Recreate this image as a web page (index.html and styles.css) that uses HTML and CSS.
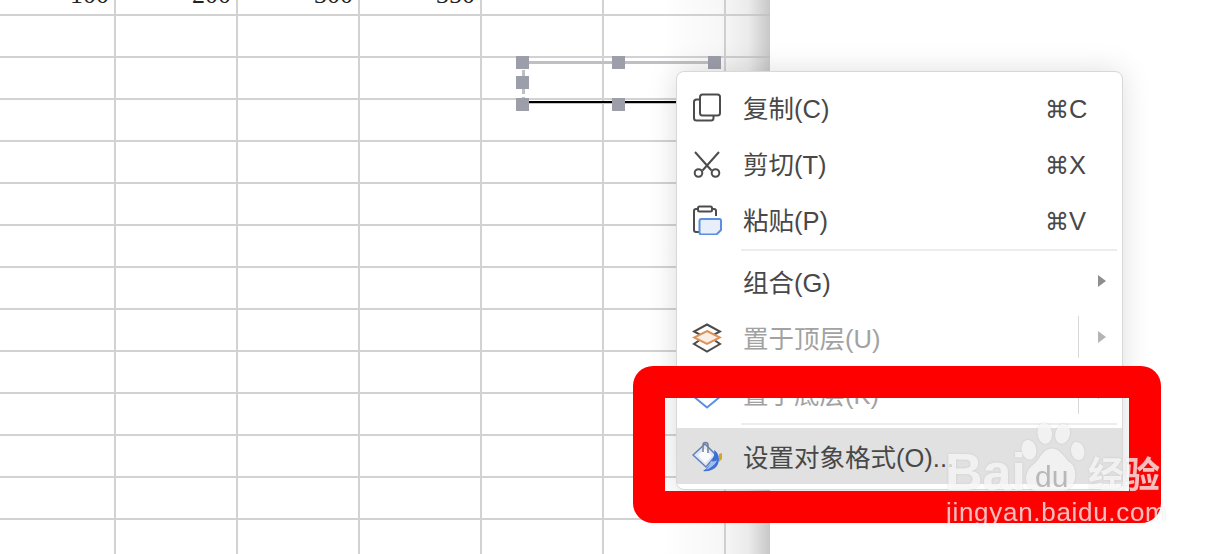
FILE: index.html
```html
<!DOCTYPE html>
<html lang="zh-CN">

<head>
	<meta charset="UTF-8" />
	<title>设置对象格式</title>
	<link rel="stylesheet" href="styles.css">
</head>

<body>
	<div class="sheet">
		<div class="axis">
			<div class="axis-cell first">100</div>
			<div class="axis-cell">200</div>
			<div class="axis-cell">300</div>
			<div class="axis-cell">350</div>
		</div>
		<div class="shade"></div>

		<!-- selected text box -->
		<div class="shape">
			<span class="handle h1"></span>
			<span class="handle h2"></span>
			<span class="handle h3"></span>
			<span class="handle h4"></span>
			<span class="handle h5"></span>
			<span class="handle h6"></span>
		</div>
	</div>

	<div class="menu">
		<div class="item">
			<span class="icon">
				<svg width="30" height="30" viewBox="0 0 30 30" fill="none" stroke="#4c4c4c" stroke-width="2">
					<rect x="8" y="1.500" width="20" height="21" rx="2.500" />
					<path d="M8 6.500H4.500A2.500 2.500 0 0 0 2 9v16a2.500 2.500 0 0 0 2.500 2.500H19a2.500 2.500 0 0 0 2.500-2.500v-2.500" />
				</svg>
			</span>
			<span class="label">复制(C)</span>
			<span class="key"><span class="cmd">⌘</span>C</span>
		</div>
		<div class="item">
			<span class="icon">
				<svg width="30" height="30" viewBox="0 0 30 30" fill="none" stroke="#4c4c4c" stroke-width="2">
					<path d="M3 3l16.500 18.500M27 3L10.500 21.500" />
					<circle cx="6.500" cy="24" r="3.800" />
					<circle cx="23.500" cy="24" r="3.800" />
				</svg>
			</span>
			<span class="label">剪切(T)</span>
			<span class="key"><span class="cmd">⌘</span>X</span>
		</div>
		<div class="item">
			<span class="icon">
				<svg width="30" height="30" viewBox="0 0 30 30" fill="none" stroke-width="2">
					<path d="M6 4H4a2 2 0 0 0-2 2v19a2 2 0 0 0 2 2h3M20 4h2a2 2 0 0 1 2 2v5" stroke="#4c4c4c" />
					<rect x="6" y="1.500" width="14" height="5" rx="1.500" stroke="#4c4c4c" />
					<path d="M9.500 14h18a1.500 1.500 0 0 1 1.500 1.500V25l-4.500 4.500H9.500a2 2 0 0 1-2-2V16a2 2 0 0 1 2-2z" fill="#e8eefa" stroke="#5b8fe0" />
				</svg>
			</span>
			<span class="label">粘贴(P)</span>
			<span class="key"><span class="cmd">⌘</span>V</span>
		</div>
		<div class="sep"></div>
		<div class="item">
			<span class="icon"></span>
			<span class="label">组合(G)</span>
			<span class="arrow"></span>
		</div>
		<div class="item off">
			<span class="icon">
				<svg width="30" height="30" viewBox="0 0 30 30" fill="none" stroke-width="2">
					<path d="M15 1.500L28 8.500 15 15.500 2 8.500z" stroke="#4c4c4c" />
					<path d="M7 17.500L2 21l13 7.500L28 21l-5-3.500" stroke="#4c4c4c" />
					<path d="M15 8L28 14.500 15 21 2 14.500z" fill="#fbeee3" stroke="#d9925a" />
				</svg>
			</span>
			<span class="label">置于顶层(U)</span>
			<span class="split"></span>
			<span class="arrow"></span>
		</div>
		<div class="item off">
			<span class="icon">
				<svg width="30" height="30" viewBox="0 0 30 30" fill="none" stroke-width="2">
					<path d="M15 1.500L28 8.500 15 15.500 2 8.500z" stroke="#4c4c4c" />
					<path d="M1 17l14 11.500L29 17" stroke="#5b8fe0" />
				</svg>
			</span>
			<span class="label">置于底层(K)</span>
			<span class="split"></span>
			<span class="arrow"></span>
		</div>
		<div class="sep tight"></div>
		<div class="item active">
			<span class="icon">
				<svg width="32" height="32" viewBox="0 0 32 32">
					<path d="M1 14L13 3l11 11-10 12z" fill="#dfe7f5" stroke="#5f7fb8" stroke-width="1.500" />
					<path d="M6 14L13 8l7 7-7 7z" fill="#f8fafd" />
					<path d="M11 11V4a2.500 2.500 0 0 1 5 0v8" fill="none" stroke="#77808f" stroke-width="1.500" />
					<path d="M22 9c5 3 6 9 4 14-2 5-9 8-15 7 3-2 5-4 7-7 3-4 5-9 4-14z" fill="#3d6fd6" />
					<path d="M19 20c2 1 5 0 6-1-1 4-6 8-11 10 2-2 4-5 5-9z" fill="#9fc0f0" />
					<path d="M27 13l3-1v6l-3 3z" fill="#d8a520" />
				</svg>
			</span>
			<span class="label">设置对象格式(O)...</span>
		</div>
	</div>

	<div class="mark-box"></div>

	<!-- watermark -->
	<div class="watermark">
		<span class="wm-bai">Bai</span>
		<svg class="wm-paw" width="66" height="70" viewBox="0 0 100 106">
			<ellipse cx="12" cy="42" rx="11" ry="15" transform="rotate(-12 12 42)" />
			<ellipse cx="36" cy="17" rx="11" ry="16" transform="rotate(-6 36 17)" />
			<ellipse cx="63" cy="18" rx="11" ry="15" transform="rotate(14 63 18)" />
			<ellipse cx="86" cy="44" rx="10" ry="14" transform="rotate(-14 86 44)" />
			<path d="M47 40c12 0 18 14 28 22 12 9 10 43-14 42H26C4 104 3 76 18 65c11-7 14-25 29-25z" />
		</svg>
		<span class="wm-du">du</span>
		<span class="wm-cn">经验</span>
		<span class="wm-url">jingyan.baidu.com</span>
	</div>
</body>

</html>
```

FILE: styles.css
```css
* {
	box-sizing: border-box;
}

html,
body {
	margin: 0;
	height: 100%;
	overflow: hidden;
	background: #fff;
}

/* sheet behind the menu */
.sheet {
	position: relative;
	width: 770px;
	height: 554px;
	overflow: hidden;
	background-color: #fff;
	background-image:
		repeating-linear-gradient(90deg, transparent 0, transparent 114px, #d2d2d2 114px, #d2d2d2 116px, transparent 116px, transparent 122px),
		repeating-linear-gradient(180deg, transparent 0, transparent 14px, #d2d2d2 14px, #d2d2d2 16px, transparent 16px, transparent 42px);
}

.axis {
	display: flex;
	margin-top: -18px;
	font-family: "Liberation Serif", serif;
	font-size: 26px;
	line-height: 26px;
	color: #222;
}

.axis-cell {
	width: 122px;
	padding-right: 6px;
	text-align: right;
}

.axis-cell.first {
	width: 115px;
}

.shade {
	position: absolute;
	top: 0;
	right: 0;
	bottom: 0;
	width: 110px;
	background: linear-gradient(90deg, rgba(190, 190, 190, 0), rgba(190, 190, 190, .12) 55%, rgba(190, 190, 190, .3) 80%, rgba(190, 190, 190, .85));
}

.shape {
	position: absolute;
	left: 522px;
	top: 61px;
	width: 192px;
	height: 42px;
	border-top: 3px solid #c0c0c4;
	border-left: 3px dashed #c0c0c4;
	border-bottom: 2px solid #000;
	box-shadow: 0 1px 0 #c4c4c4;
}

.handle {
	position: absolute;
	width: 13px;
	height: 13px;
	background: #9c9ea9;
}

.h1 { left: -9px; top: -8px; }
.h2 { left: 87px; top: -8px; }
.h3 { left: 183px; top: -8px; }
.h4 { left: -9px; top: 12px; }
.h5 { left: -9px; top: 34px; }
.h6 { left: 87px; top: 34px; }

/* context menu */
.menu {
	position: absolute;
	left: 676px;
	top: 71px;
	width: 447px;
	height: 419px;
	padding-top: 7px;
	background: #fff;
	border: 1px solid #d8d8d8;
	border-radius: 8px;
	box-shadow: 0 0 30px rgba(0, 0, 0, .13);
	font-family: "Liberation Sans", "Noto Sans CJK SC", sans-serif;
	font-size: 25.5px;
	color: #484848;
}

.item {
	display: flex;
	align-items: center;
	height: 56px;
	padding-left: 15px;
}

.icon {
	display: flex;
	align-items: center;
	width: 51px;
	height: 32px;
	margin-top: 2px;
	flex: none;
}

.label {
	flex: 1;
	padding-bottom: 2px;
	white-space: nowrap;
}

.key {
	width: 77px;
	padding-top: 3px;
	line-height: 30px;
}

.cmd {
	font-family: "DejaVu Sans", sans-serif;
	font-size: 24px;
	line-height: 1;
}

.arrow {
	width: 0;
	height: 0;
	margin-right: 16px;
	border-left: 8px solid #8e8e8e;
	border-top: 6px solid transparent;
	border-bottom: 6px solid transparent;
}

.split {
	width: 1px;
	height: 42px;
	margin-right: 19px;
	background: #d8d8d8;
}

.off .label {
	color: #a2a2a2;
}

.off .arrow {
	border-left-color: #b4b4b4;
}

.sep {
	height: 2px;
	margin: 2px 5px 2px 64px;
	background: #ededed;
}

.sep.tight {
	margin: 2px 5px 3px 64px;
}

.item.active {
	background: #e1e1e1;
}

/* red marker drawn on top */
.mark-box {
	position: absolute;
	left: 633px;
	top: 366px;
	width: 528px;
	height: 157px;
	border: 32px solid #f00;
	border-radius: 20px;
}

.watermark {
	position: absolute;
	left: 945px;
	top: 420px;
	width: 222px;
	height: 108px;
	color: rgba(255, 255, 255, .72);
	font-family: "Liberation Sans", sans-serif;
	filter: drop-shadow(0 0 1px rgba(120, 120, 120, .3));
}

.wm-bai {
	position: absolute;
	left: 0;
	top: 22px;
	font-size: 52px;
	font-weight: bold;
	line-height: 60px;
}

.wm-paw {
	position: absolute;
	left: 76px;
	top: 2px;
	fill: rgba(255, 255, 255, .72);
}

.wm-du {
	position: absolute;
	left: 90px;
	top: 43px;
	font-size: 30px;
	line-height: 28px;
	color: rgba(170, 170, 170, .8);
}

.wm-cn {
	position: absolute;
	left: 143px;
	top: 30px;
	font-family: "Noto Sans CJK SC", sans-serif;
	font-size: 36px;
	font-weight: bold;
	line-height: 44px;
	white-space: nowrap;
}

.wm-url {
	position: absolute;
	left: 1px;
	top: 77px;
	font-size: 26px;
	line-height: 30px;
	letter-spacing: .7px;
	white-space: nowrap;
}
```
